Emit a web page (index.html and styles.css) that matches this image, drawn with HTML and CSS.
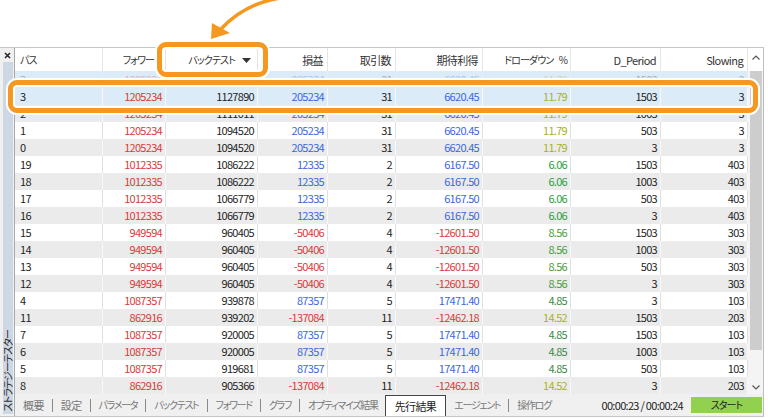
FILE: index.html
```html
<!DOCTYPE html>
<html lang="ja">
<head>
<meta charset="utf-8">
<title>ストラテジーテスター</title>
<link rel="stylesheet" href="styles.css">
</head>
<body>
<div class="spacer"></div>
<div class="window">
  <div class="side">
    <div class="close"><svg width="7" height="7" viewBox="0 0 7 7"><path d="M1 1 L6 6 M6 1 L1 6" stroke="#222" stroke-width="1.5"/></svg></div>
    <div class="side-tab"><span class="side-label k">ストラテジーテスター</span></div>
  </div>
  <div class="content">
    <div class="grid-area">
      <div class="table">
        <div class="hrow">
          <span class="hc k">パス</span>
          <span class="hc k fw">フォワー</span>
          <span class="hc sorted"><span class="k">バックテスト</span><svg class="sort" width="9" height="5" viewBox="0 0 9 5"><path d="M0 0 H9 L4.5 5Z" fill="#333"/></svg></span>
          <span class="hc">損益</span>
          <span class="hc">取引数</span>
          <span class="hc">期待利得</span>
          <span class="hc k ddh">ドローダウン %</span>
          <span class="hc">D_Period</span>
          <span class="hc">Slowing</span>
        </div>
        <div class="row sel faded"><span class="c">3</span><span class="c r">1205234</span><span class="c">1127890</span><span class="c b">205234</span><span class="c">31</span><span class="c b">6620.45</span><span class="c dy">11.79</span><span class="c">1503</span><span class="c">3</span></div>
        <div class="row sel"><span class="c">3</span><span class="c r">1205234</span><span class="c">1127890</span><span class="c b">205234</span><span class="c">31</span><span class="c b">6620.45</span><span class="c dy">11.79</span><span class="c">1503</span><span class="c">3</span></div>
        <div class="row alt"><span class="c">2</span><span class="c r">1205234</span><span class="c">1111011</span><span class="c b">205234</span><span class="c">31</span><span class="c b">6620.45</span><span class="c dy">11.79</span><span class="c">1003</span><span class="c">3</span></div>
        <div class="row"><span class="c">1</span><span class="c r">1205234</span><span class="c">1094520</span><span class="c b">205234</span><span class="c">31</span><span class="c b">6620.45</span><span class="c dy">11.79</span><span class="c">503</span><span class="c">3</span></div>
        <div class="row alt"><span class="c">0</span><span class="c r">1205234</span><span class="c">1094520</span><span class="c b">205234</span><span class="c">31</span><span class="c b">6620.45</span><span class="c dy">11.79</span><span class="c">3</span><span class="c">3</span></div>
        <div class="row"><span class="c">19</span><span class="c r">1012335</span><span class="c">1086222</span><span class="c b">12335</span><span class="c">2</span><span class="c b">6167.50</span><span class="c dg">6.06</span><span class="c">1503</span><span class="c">403</span></div>
        <div class="row alt"><span class="c">18</span><span class="c r">1012335</span><span class="c">1086222</span><span class="c b">12335</span><span class="c">2</span><span class="c b">6167.50</span><span class="c dg">6.06</span><span class="c">1003</span><span class="c">403</span></div>
        <div class="row"><span class="c">17</span><span class="c r">1012335</span><span class="c">1066779</span><span class="c b">12335</span><span class="c">2</span><span class="c b">6167.50</span><span class="c dg">6.06</span><span class="c">503</span><span class="c">403</span></div>
        <div class="row alt"><span class="c">16</span><span class="c r">1012335</span><span class="c">1066779</span><span class="c b">12335</span><span class="c">2</span><span class="c b">6167.50</span><span class="c dg">6.06</span><span class="c">3</span><span class="c">403</span></div>
        <div class="row"><span class="c">15</span><span class="c r">949594</span><span class="c">960405</span><span class="c r">-50406</span><span class="c">4</span><span class="c r">-12601.50</span><span class="c dm">8.56</span><span class="c">1503</span><span class="c">303</span></div>
        <div class="row alt"><span class="c">14</span><span class="c r">949594</span><span class="c">960405</span><span class="c r">-50406</span><span class="c">4</span><span class="c r">-12601.50</span><span class="c dm">8.56</span><span class="c">1003</span><span class="c">303</span></div>
        <div class="row"><span class="c">13</span><span class="c r">949594</span><span class="c">960405</span><span class="c r">-50406</span><span class="c">4</span><span class="c r">-12601.50</span><span class="c dm">8.56</span><span class="c">503</span><span class="c">303</span></div>
        <div class="row alt"><span class="c">12</span><span class="c r">949594</span><span class="c">960405</span><span class="c r">-50406</span><span class="c">4</span><span class="c r">-12601.50</span><span class="c dm">8.56</span><span class="c">3</span><span class="c">303</span></div>
        <div class="row"><span class="c">4</span><span class="c r">1087357</span><span class="c">939878</span><span class="c b">87357</span><span class="c">5</span><span class="c b">17471.40</span><span class="c dd">4.85</span><span class="c">3</span><span class="c">103</span></div>
        <div class="row alt"><span class="c">11</span><span class="c r">862916</span><span class="c">939202</span><span class="c r">-137084</span><span class="c">11</span><span class="c r">-12462.18</span><span class="c dy">14.52</span><span class="c">1503</span><span class="c">203</span></div>
        <div class="row"><span class="c">7</span><span class="c r">1087357</span><span class="c">920005</span><span class="c b">87357</span><span class="c">5</span><span class="c b">17471.40</span><span class="c dd">4.85</span><span class="c">1503</span><span class="c">103</span></div>
        <div class="row alt"><span class="c">6</span><span class="c r">1087357</span><span class="c">920005</span><span class="c b">87357</span><span class="c">5</span><span class="c b">17471.40</span><span class="c dd">4.85</span><span class="c">1003</span><span class="c">103</span></div>
        <div class="row"><span class="c">5</span><span class="c r">1087357</span><span class="c">919681</span><span class="c b">87357</span><span class="c">5</span><span class="c b">17471.40</span><span class="c dd">4.85</span><span class="c">503</span><span class="c">103</span></div>
        <div class="row alt"><span class="c">8</span><span class="c r">862916</span><span class="c">905366</span><span class="c r">-137084</span><span class="c">11</span><span class="c r">-12462.18</span><span class="c dy">14.52</span><span class="c">3</span><span class="c">203</span></div>
      </div>
      <div class="sb">
        <div class="sb-up"><svg width="8" height="5" viewBox="0 0 8 5"><path d="M0.5 4.5 L4 1 L7.5 4.5" fill="none" stroke="#555" stroke-width="1.2"/></svg></div>
        <div class="sb-track"><div class="thumb"></div></div>
        <div class="sb-down"><svg width="8" height="5" viewBox="0 0 8 5"><path d="M0.5 0.5 L4 4 L7.5 0.5" fill="none" stroke="#555" stroke-width="1.2"/></svg></div>
      </div>
    </div>
    <div class="tabs">
      <span class="tab first">概要</span><span class="sep"></span>
      <span class="tab">設定</span><span class="sep"></span>
      <span class="tab k">パラメータ</span><span class="sep"></span>
      <span class="tab k">バックテスト</span><span class="sep"></span>
      <span class="tab k">フォワード</span><span class="sep"></span>
      <span class="tab k">グラフ</span><span class="sep"></span>
      <span class="tab k">オプティマイズ結果</span>
      <span class="tab active">先行結果</span>
      <span class="tab k">エージェント</span><span class="sep"></span>
      <span class="tab k">操作ログ</span>
      <span class="time">00:00:23 / 00:00:24</span>
      <span class="start k">スタート</span>
    </div>
  </div>
</div>

<svg class="arrow" width="768" height="50" viewBox="0 0 768 50">
  <path d="M290 -3 Q248 0 221 29" fill="none" stroke="#f5981f" stroke-width="3.5" stroke-linecap="round"/>
  <polygon points="211,39 212,23 230,33" fill="#f5981f"/>
</svg>
<div class="hl hl-head"></div>
<div class="hl hl-row"></div>
</body>
</html>
```
FILE: styles.css
```css
html, body {
  margin: 0;
  padding: 0;
}
body {
  width: 768px;
  height: 418px;
  overflow: hidden;
  position: relative;
  background: #fff;
  font-family: "Noto Sans CJK JP", "Noto Sans", sans-serif;
  font-size: 11px;
  letter-spacing: -0.6px;
  color: #1e1e1e;
  font-feature-settings: "palt";
}
.k {
  font-size: 10px;
  letter-spacing: -0.9px;
}
.spacer {
  height: 47px;
}
.window {
  width: 764px;
  height: 370px;
  box-sizing: border-box;
  border-top: 1px solid #c6c6c6;
  border-right: 1px solid #bdbdbd;
  border-bottom: 1px solid #c6c6c6;
  display: flex;
  background: #f0f0f0;
}
.side {
  width: 14px;
  border-right: 1px solid #a9a9a9;
  display: flex;
  flex-direction: column;
}
.close {
  height: 14px;
  display: flex;
  align-items: center;
  justify-content: center;
  padding-left: 1px;
}
.side-tab {
  flex: 1;
  margin: 0 1px 2px 3px;
  background: #cdd8e4;
  display: flex;
  flex-direction: column;
  justify-content: flex-end;
  align-items: center;
}
.side-label {
  writing-mode: vertical-rl;
  text-orientation: sideways;
  transform: rotate(180deg);
  line-height: 10px;
  color: #2a2a2a;
  padding-top: 2px;
  white-space: nowrap;
}
.content {
  flex: 1;
  min-width: 0;
  display: flex;
  flex-direction: column;
}
.grid-area {
  display: flex;
  height: 346px;
  background: #fff;
}
.table {
  width: 733px;
}
.hrow, .row {
  display: grid;
  grid-template-columns: 88px 63px 92px 70px 68px 87px 88px 90px 87px;
}
.hrow {
  height: 23px;
  background: #fff;
}
.hc {
  box-sizing: border-box;
  border-right: 1px solid #e6e6e6;
  text-align: right;
  padding: 1px 4px 0 0;
  line-height: 22px;
  color: #333;
  white-space: nowrap;
  overflow: hidden;
}
.hc.k {
  padding-right: 3px;
}
.hc.fw {
  padding-right: 11px;
}
.hc.ddh {
  word-spacing: 4px;
}
.hc:first-child {
  text-align: left;
  padding-left: 5px;
}
.hc.sorted {
  padding-right: 6px;
  display: flex;
  justify-content: flex-end;
  align-items: center;
}
.sort {
  margin-left: 7px;
  margin-top: 1px;
}
.row {
  height: 17px;
  background: #fff;
}
.row.alt {
  background: #ebebeb;
}
.row.sel {
  background: #dcebf8;
}
.c {
  box-sizing: border-box;
  border-right: 1px solid #e0e0e0;
  text-align: right;
  padding-right: 3px;
  line-height: 17px;
  letter-spacing: -0.7px;
  white-space: nowrap;
  overflow: hidden;
}
.row.alt .c, .row.sel .c {
  border-right-color: #f8f8f8;
}
.c:first-child {
  text-align: left;
  padding-left: 5px;
}
.row.faded .c {
  opacity: 0.3;
}
.r { color: #d93a3a; }
.b { color: #3a67df; }
.dy { color: #a9b21c; }
.dg { color: #27a03c; }
.dm { color: #4a9e3a; }
.dd { color: #3a8a45; }

.sb {
  width: 15px;
  display: flex;
  flex-direction: column;
  background: #f4f4f4;
}
.sb-up {
  height: 23px;
  background: #fff;
  display: flex;
  align-items: center;
  justify-content: center;
  padding-bottom: 4px;
  box-sizing: border-box;
}
.sb-track {
  flex: 1;
  padding: 0 1px 0 2px;
}
.thumb {
  height: 279px;
  background: #cdcdcd;
}
.sb-down {
  height: 14px;
  display: flex;
  align-items: center;
  justify-content: center;
}

.tabs {
  height: 22px;
  display: flex;
  align-items: center;
  color: #777;
  background: #f0f0f0;
  white-space: nowrap;
}
.tab {
  padding: 0 8px;
  line-height: 20px;
}
.tab.k {
  letter-spacing: -1.3px;
}
.tab.first {
  padding-left: 8px;
}
.sep {
  width: 1px;
  height: 13px;
  background: #8a8a8a;
}
.tab.active {
  align-self: stretch;
  margin-top: 1px;
  margin-left: -1px;
  padding: 0 9px;
  background: #fff;
  border: 1px solid #444;
  border-bottom: none;
  color: #222;
  display: flex;
  align-items: center;
}
.time {
  margin-left: auto;
  margin-right: 8px;
  color: #222;
  letter-spacing: -0.7px;
}
.start {
  width: 71px;
  height: 16px;
  margin-right: 1px;
  background: #92d050;
  text-align: center;
  line-height: 16px;
  color: #1e1e1e;
}

.arrow {
  position: absolute;
  left: 0;
  top: 0;
  pointer-events: none;
}
.hl {
  position: absolute;
  box-sizing: border-box;
  border: 5px solid #f5981f;
  border-radius: 9px;
  box-shadow: 0 0 0 2px #fff, inset 0 0 0 2px #fff;
  pointer-events: none;
}
.hl-head {
  left: 157px;
  top: 42px;
  width: 111px;
  height: 35px;
}
.hl-row {
  left: 8px;
  top: 80px;
  width: 750px;
  height: 33px;
}
```
